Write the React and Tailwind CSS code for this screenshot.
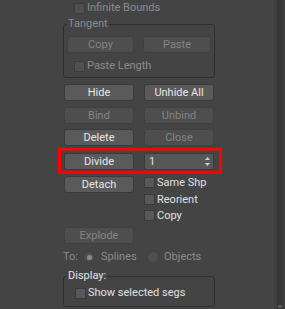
import React from "react";

function Btn({ children, disabled, className = "" }) {
  const tone = disabled
    ? "bg-[#4e4e4e] border-[#404040] text-[#848484]"
    : "bg-[#5a5a5a] border-[#3b3b3b] text-[#e6e6e6]";
  return (
    <div
      className={`h-[17px] rounded-[3px] border flex items-center justify-center text-[11px] leading-none ${tone} ${className}`}
    >
      {children}
    </div>
  );
}

function Check({ disabled, className = "" }) {
  const tone = disabled
    ? "bg-[#505050] border-[#3c3c3c]"
    : "bg-[#585858] border-[#393939]";
  return <div className={`w-[11px] h-[11px] border shrink-0 ${tone} ${className}`} />;
}

function Radio({ selected }) {
  return (
    <div className="w-[12px] h-[12px] rounded-full bg-[#4f4f4f] border border-[#404040] flex items-center justify-center shrink-0">
      {selected && <div className="w-[5px] h-[5px] rounded-full bg-[#8c8c8c]" />}
    </div>
  );
}

export default function App() {
  return (
    <div className="w-[285px] h-[309px] bg-[#444444] flex overflow-hidden font-['Roboto',sans-serif] text-[11px] leading-[12px]">
      <div className="w-[274px] h-full pl-[63px]">
        <div className="w-[152px]">
          {/* Infinite Bounds */}
          <div className="h-[14px] mt-[1px] flex items-center pl-[11px] gap-[2px]">
            <Check disabled />
            <span className="text-[#8c8c8c]">Infinite Bounds</span>
          </div>

          {/* Tangent group */}
          <fieldset className="mt-[2px] border border-[#2e2e2e] rounded-[3px] pb-[5px]">
            <legend className="ml-[3px] px-[1px] h-[14px] leading-[14px] text-[#8c8c8c]">Tangent</legend>
            <div className="flex mt-[5px] pl-[3px] gap-[9px]">
              <Btn disabled className="w-[67px]">Copy</Btn>
              <Btn disabled className="w-[68px]">Paste</Btn>
            </div>
            <div className="h-[12px] mt-[7px] flex items-center pl-[10px] gap-[2px]">
              <Check disabled />
              <span className="text-[#8c8c8c]">Paste Length</span>
            </div>
          </fieldset>

          {/* Button rows */}
          <div className="flex gap-[10px] pl-[1px] mt-[6px]">
            <Btn className="w-[70px]">Hide</Btn>
            <Btn className="w-[70px]">Unhide All</Btn>
          </div>
          <div className="flex gap-[10px] pl-[1px] mt-[6px]">
            <Btn disabled className="w-[70px]">Bind</Btn>
            <Btn disabled className="w-[70px]">Unbind</Btn>
          </div>
          <div className="flex gap-[10px] pl-[1px] mt-[5px]">
            <Btn className="w-[70px]">Delete</Btn>
            <Btn disabled className="w-[70px]">Close</Btn>
          </div>

          {/* Highlighted Divide row */}
          <div className="ml-[-5px] mt-[2px] w-[164px] border-[3px] border-[#ff0000] pl-[3px] pt-[2px] pb-[1px] flex gap-[10px]">
            <Btn className="w-[70px] text-[#dedede]">Divide</Btn>
            <div className="w-[70px] h-[17px] rounded-[2px] border border-[#3a3a3a] bg-[#575757] flex items-center justify-between pl-[4px] pr-[2px] text-[#e0e0e0]">
              <span>1</span>
              <svg width="7" height="11" viewBox="0 0 7 11">
                <path d="M3.5 1 L6 4 L1 4 Z" fill="#cfcfcf" />
                <path d="M3.5 10 L6 7 L1 7 Z" fill="#cfcfcf" />
              </svg>
            </div>
          </div>

          {/* Detach + options */}
          <div className="flex gap-[10px] pl-[1px] mt-[2px]">
            <Btn className="w-[70px]">Detach</Btn>
            <div className="flex flex-col">
              <div className="h-[17px] flex items-start gap-[2px]">
                <Check className="mt-[1px]" />
                <span className="text-[#e0e0e0] mt-[1px]">Same Shp</span>
              </div>
              <div className="h-[16px] flex items-start gap-[2px]">
                <Check className="mt-[1px]" />
                <span className="text-[#e0e0e0] mt-[1px]">Reorient</span>
              </div>
              <div className="h-[16px] flex items-start gap-[2px]">
                <Check className="mt-[1px]" />
                <span className="text-[#e0e0e0] mt-[1px]">Copy</span>
              </div>
            </div>
          </div>

          <div className="pl-[1px] mt-[2px]">
            <Btn disabled className="w-[70px]">Explode</Btn>
          </div>

          {/* To: radios */}
          <div className="h-[14px] mt-[6px] flex items-center text-[#8a8a8a]">
            <span className="w-[20px]">To:</span>
            <Radio selected />
            <span className="ml-[6px] w-[46px]">Splines</span>
            <Radio />
            <span className="ml-[5px]">Objects</span>
          </div>

          {/* Display group */}
          <fieldset className="mt-[5px] border border-[#2e2e2e] rounded-[3px] pb-[7px]">
            <legend className="ml-[3px] px-[1px] h-[14px] leading-[14px] text-[#e4e4e4]">Display:</legend>
            <div className="h-[12px] mt-[4px] flex items-center pl-[11px] gap-[2px]">
              <Check />
              <span className="text-[#e0e0e0]">Show selected segs</span>
            </div>
          </fieldset>
        </div>
      </div>

      {/* right scroll strip */}
      <div className="w-[11px] h-full flex">
        <div className="w-[3px] h-full bg-[#3f3f3f]" />
        <div className="w-[6px] h-full bg-[#373737] flex flex-col justify-end items-center">
          <div className="w-[4px] h-[3px] bg-[#555555] mb-[1px]" />
        </div>
        <div className="w-[2px] h-full bg-[#3d3d3d]" />
      </div>
    </div>
  );
}
